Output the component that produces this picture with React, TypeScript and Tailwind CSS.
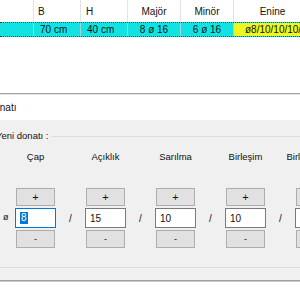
import React from "react";

const font = { fontFamily: '"Liberation Sans", Arial, sans-serif' };

function Col({ label, value, focused }: { label: string; value: string; focused?: boolean }) {
  return (
    <div className="flex flex-col items-center w-[41px] shrink-0">
      <div className="h-[16px] leading-[16px] whitespace-nowrap text-[9.5px] text-[#111]">{label}</div>
      <div className="h-[23px]" />
      <div className="w-[39px] h-[18px] bg-[#e1e1e1] border border-[#adadad] flex items-center justify-center text-[11px] leading-none text-[#111]">+</div>
      <div
        className={
          "mt-[2px] w-[41px] h-[20px] bg-white border flex items-center pl-[4px] text-[10px] text-[#111] " +
          (focused ? "border-[#0078d7]" : "border-[#7a7a7a]")
        }
      >
        {focused ? (
          <span className="bg-[#0078d7] text-white px-[1px] leading-[12px]">{value}</span>
        ) : (
          <span>{value}</span>
        )}
      </div>
      <div className="mt-[2px] w-[39px] h-[18px] bg-[#e1e1e1] border border-[#adadad] flex items-center justify-center text-[9px] leading-none text-[#111]">-</div>
    </div>
  );
}

function Sep({ children }: { children: React.ReactNode }) {
  return (
    <div className="flex flex-col items-center w-[29px] shrink-0">
      <div className="h-[59px]" />
      <div className="h-[20px] flex items-center text-[10px] text-[#111]">{children}</div>
    </div>
  );
}

export default function App() {
  return (
    <div className="w-[300px] h-[300px] overflow-hidden bg-white relative" style={font}>
      {/* table */}
      <div className="w-[340px] text-[10px] text-[#111]">
        <div className="flex h-[22px] bg-white">
          <div className="w-[33px] shrink-0" />
          <div className="w-[47px] shrink-0 border-l border-[#e3e3e3] pl-[4px] flex items-center">B</div>
          <div className="w-[47px] shrink-0 border-l border-[#e3e3e3] pl-[5px] flex items-center">H</div>
          <div className="w-[53px] shrink-0 border-l border-[#e3e3e3] flex items-center justify-center">Majör</div>
          <div className="w-[53px] shrink-0 border-l border-[#e3e3e3] flex items-center justify-center">Minör</div>
          <div className="w-[78px] shrink-0 border-l border-[#e3e3e3] flex items-center justify-center">Enine</div>
        </div>
        <div className="flex h-[15px] border-y border-dotted border-[#3a3a00] bg-[#12e2e2]">
          <div className="w-[33px] shrink-0" />
          <div className="w-[47px] shrink-0 border-l border-[#9fd6d6] pl-[6px] flex items-center">70 cm</div>
          <div className="w-[47px] shrink-0 border-l border-[#9fd6d6] pl-[6px] flex items-center">40 cm</div>
          <div className="w-[53px] shrink-0 border-l border-[#9fd6d6] flex items-center justify-center">8 ø 16</div>
          <div className="w-[53px] shrink-0 border-l border-[#9fd6d6] flex items-center justify-center">6 ø 16</div>
          <div className="w-[78px] shrink-0 border-l border-[#9fd6d6] bg-[#eef81e] pl-[11px] flex items-center whitespace-nowrap overflow-hidden">ø8/10/10/10/10</div>
        </div>
      </div>
      <div className="h-[56px]" />
      <div className="h-[1px] bg-[#a0a0a0]" />
      <div className="h-[1px] bg-[#e4e4e4]" />
      <div className="h-[25px] bg-white flex items-center text-[10px] text-[#111]">
        <span className="ml-[-13px]">Donatı</span>
      </div>
      {/* gray panel */}
      <div className="h-[160px] bg-[#f0f0f0] pt-[16px]">
        <div className="relative mx-[-10px] h-[132px] border border-[#dcdcdc] rounded-[2px]">
          <div className="absolute top-[-7px] left-[5px] bg-[#f0f0f0] pr-[4px] text-[9.5px] leading-[12px] text-[#111] whitespace-nowrap">Yeni donatı :</div>
          <div className="flex pl-[24px] pt-[12px]">
            <div className="w-[0px] shrink-0 relative">
              <div className="absolute left-[-12px] top-[59px] h-[20px] flex items-center text-[9px] text-[#111]">ø</div>
            </div>
            <Col label="Çap" value="8" focused />
            <Sep>/</Sep>
            <Col label="Açıklık" value="15" />
            <Sep>/</Sep>
            <Col label="Sarılma" value="10" />
            <Sep>/</Sep>
            <Col label="Birleşim" value="10" />
            <Sep>/</Sep>
            <Col label="Birleşim Boyu" value="10" />
          </div>
        </div>
      </div>
      <div className="h-[1px] bg-[#a0a0a0]" />
      <div className="h-[1px] bg-[#c8c8c8]" />
    </div>
  );
}
